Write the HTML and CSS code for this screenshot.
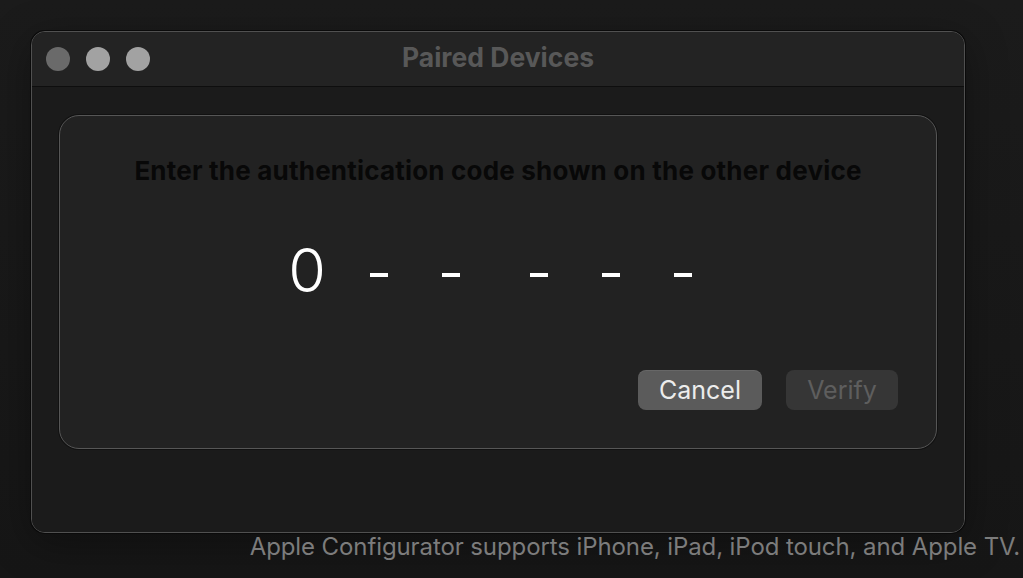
FILE: index.html
```html
<!DOCTYPE html>
<html lang="en">
<head>
<meta charset="utf-8">
<title>Paired Devices</title>
<link rel="stylesheet" href="styles.css">
</head>
<body>
<div class="window">
  <div class="titlebar">
    <div class="lights">
      <span class="light light-close"></span>
      <span class="light"></span>
      <span class="light"></span>
    </div>
    <div class="title">Paired Devices</div>
    <div class="spacer"></div>
  </div>
  <div class="content">
    <div class="sheet">
      <h1 class="prompt">Enter the authentication code shown on the other device</h1>
      <div class="code">
        <div class="group">
          <span class="slot digit">0</span>
          <span class="slot"><span class="dash"></span></span>
          <span class="slot"><span class="dash"></span></span>
        </div>
        <div class="group">
          <span class="slot"><span class="dash"></span></span>
          <span class="slot"><span class="dash"></span></span>
          <span class="slot"><span class="dash"></span></span>
        </div>
      </div>
      <div class="actions">
        <button class="btn btn-cancel">Cancel</button>
        <button class="btn btn-verify" disabled>Verify</button>
      </div>
    </div>
  </div>
</div>
<p class="footnote">Apple Configurator supports iPhone, iPad, iPod touch, and Apple TV.</p>
</body>
</html>
```

FILE: styles.css
```css
* { box-sizing: border-box; }

html, body {
  height: 100%;
}

body {
  margin: 0;
  padding: 31px 3px 0 31px;
  background: linear-gradient(180deg, #1b1b1b 0%, #161616 100%);
  font-family: Inter, "Liberation Sans", sans-serif;
  display: flex;
  flex-direction: column;
  align-items: flex-start;
  overflow: hidden;
}

.window {
  width: 934px;
  height: 502px;
  border: 1px solid #505050;
  border-radius: 14px;
  box-shadow: 0 0 0 1px #0a0a0a, 0 10px 40px rgba(0,0,0,0.35);
  background: #1b1b1b;
  display: flex;
  flex-direction: column;
  overflow: hidden;
}

.titlebar {
  height: 55px;
  flex: none;
  background: #232323;
  border-bottom: 1px solid #0e0e0e;
  display: grid;
  grid-template-columns: 1fr auto 1fr;
  align-items: center;
  padding: 0 14px;
}

.lights {
  display: flex;
  gap: 16px;
}

.light {
  width: 24px;
  height: 24px;
  border-radius: 50%;
  background: #a2a2a2;
}

.light-close {
  background: #6a6a6a;
}

.title {
  font-weight: 700;
  font-size: 26.5px;
  color: #585858;
  letter-spacing: 0;
  padding-bottom: 4px;
}

.content {
  flex: 1;
  padding: 28px 27px 0;
  background: #1b1b1b;
}

.sheet {
  height: 334px;
  border: 1px solid #565656;
  border-radius: 20px;
  background: #222222;
  box-shadow: 0 0 0 1px #111;
  display: flex;
  flex-direction: column;
  align-items: center;
  padding: 39px 38px 0;
}

.prompt {
  margin: 0;
  font-size: 26px;
  font-weight: 700;
  color: #080808;
  letter-spacing: 0.2px;
  line-height: 32px;
}

.code {
  display: flex;
  gap: 16px;
  margin-top: 53px;
  margin-right: 6px;
  height: 60px;
}

.group {
  display: flex;
}

.slot {
  width: 72px;
  height: 60px;
  display: flex;
  align-items: center;
  justify-content: center;
}

.digit {
  font-family: Inter, "Liberation Sans", sans-serif;
  font-weight: 300;
  font-size: 61px;
  line-height: 60px;
  color: #ffffff;
}

.dash {
  display: block;
  width: 18px;
  height: 4px;
  background: #ffffff;
  margin-top: 10px;
}

.actions {
  align-self: stretch;
  display: flex;
  justify-content: flex-end;
  gap: 24px;
  margin-top: 70px;
}

.btn {
  height: 40px;
  border: none;
  border-radius: 8px;
  font-family: Inter, "Liberation Sans", sans-serif;
  font-size: 25px;
  font-weight: 400;
  padding: 0;
}

.btn-cancel {
  width: 124px;
  background: #5b5b5b;
  color: #ececec;
  box-shadow: inset 0 1px 0 rgba(255,255,255,0.08);
}

.btn-verify {
  width: 112px;
  background: #363636;
  color: #5e5e5e;
}

.footnote {
  align-self: flex-end;
  margin: 0;
  font-size: 24px;
  line-height: 28px;
  color: #7c7c7c;
  letter-spacing: -0.1px;
}
```
